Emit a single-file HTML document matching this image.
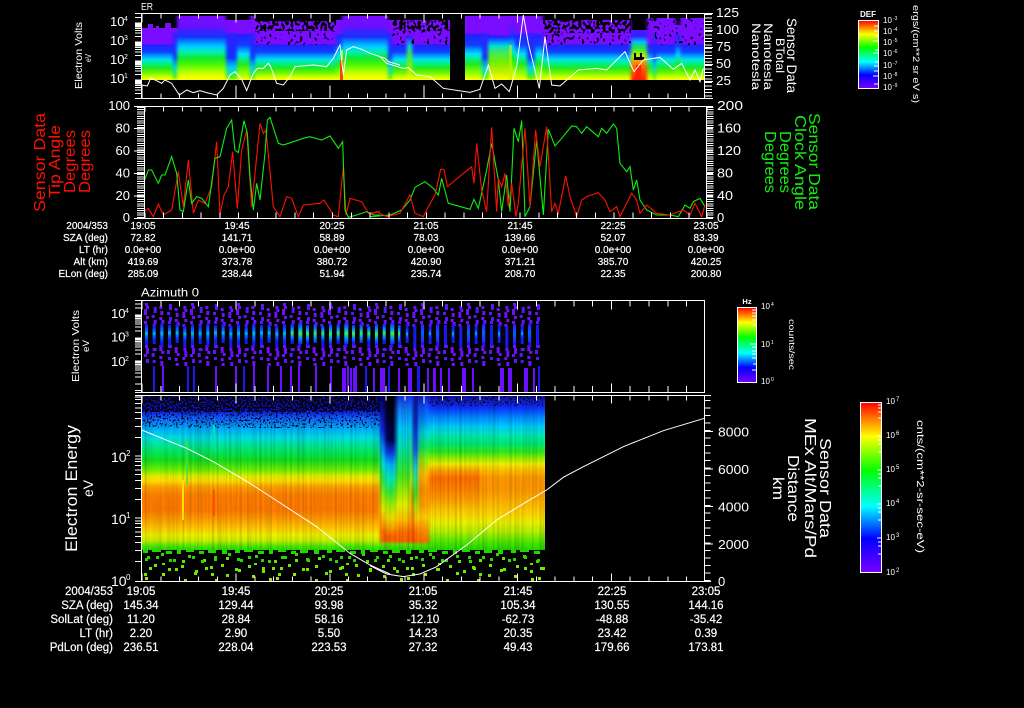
<!DOCTYPE html>
<html><head><meta charset="utf-8"><title>Sensor Data</title>
<style>
html,body{margin:0;padding:0;background:#000;width:1024px;height:708px;overflow:hidden}
svg{display:block}
text{font-family:"Liberation Sans",sans-serif;fill:#fff}
.t{font-size:10px;text-anchor:middle;stroke:#fff;stroke-width:.2}
.r{font-size:10px;text-anchor:end;stroke:#fff;stroke-width:.2}
.t2{font-size:11.5px;text-anchor:middle;stroke:#fff;stroke-width:.2}
.r2{font-size:11.5px;text-anchor:end;stroke:#fff;stroke-width:.2}
.s{font-size:7px}
</style></head><body>
<svg width="1024" height="708" viewBox="0 0 1024 708" xmlns="http://www.w3.org/2000/svg">
<defs>
<filter id="hb" x="-5%" y="0" width="110%" height="100%" color-interpolation-filters="sRGB"><feGaussianBlur stdDeviation="1.6 0"/></filter>
<filter id="nk1" x="0" y="0" width="100%" height="100%" color-interpolation-filters="sRGB"><feTurbulence type="fractalNoise" baseFrequency=".33 .27" numOctaves="1" seed="4"/><feColorMatrix values="0 0 0 0 0  0 0 0 0 0  0 0 0 0 0  14 0 0 0 -6.6"/></filter>
<filter id="nk2" x="0" y="0" width="100%" height="100%" color-interpolation-filters="sRGB"><feTurbulence type="fractalNoise" baseFrequency=".33 .27" numOctaves="1" seed="9"/><feColorMatrix values="0 0 0 0 0  0 0 0 0 0  0 0 0 0 0  14 0 0 0 -8.4"/></filter>
<filter id="nf1" x="0" y="0" width="100%" height="100%" color-interpolation-filters="sRGB"><feTurbulence type="fractalNoise" baseFrequency=".55" numOctaves="1" seed="7"/><feColorMatrix values="0 0 0 0 0  0 0 0 0 0  0 0 0 0 0  14 0 0 0 -6.2"/></filter>
<filter id="nf2" x="0" y="0" width="100%" height="100%" color-interpolation-filters="sRGB"><feTurbulence type="fractalNoise" baseFrequency=".55" numOctaves="1" seed="12"/><feColorMatrix values="0 0 0 0 0  0 0 0 0 0  0 0 0 0 0  14 0 0 0 -8"/></filter>
<filter id="nst" x="0" y="0" width="100%" height="100%" color-interpolation-filters="sRGB"><feTurbulence type="fractalNoise" baseFrequency=".4 .004" numOctaves="2" seed="3"/><feColorMatrix values="0 0 0 0 0  0 0 0 0 0  0 0 0 0 0  .45 0 0 0 -.18"/></filter>
<clipPath id="cl1"><rect x="142" y="15" width="308" height="65"/></clipPath>
<clipPath id="cl2"><rect x="465" y="15" width="240" height="65"/></clipPath>
<clipPath id="cl4"><rect x="142" y="396" width="403" height="154"/></clipPath>

<linearGradient id="a1" gradientUnits="userSpaceOnUse" x1="0" y1="0" x2="0" y2="1000"><stop offset=".016" stop-color="#7a0cff"/><stop offset=".027" stop-color="#6a10ff"/><stop offset=".03" stop-color="#4020ff"/><stop offset=".037" stop-color="#1a30ff"/><stop offset=".042" stop-color="#0090ff"/><stop offset=".047" stop-color="#00d0ff"/><stop offset=".052" stop-color="#00f0b0"/><stop offset=".058" stop-color="#10e830"/><stop offset=".065" stop-color="#50f800"/><stop offset=".071" stop-color="#a8ff00"/><stop offset=".076" stop-color="#e8ff00"/><stop offset=".08" stop-color="#ffff00"/></linearGradient>
<linearGradient id="a2" gradientUnits="userSpaceOnUse" x1="0" y1="0" x2="0" y2="1000"><stop offset=".02" stop-color="#7a0cff"/><stop offset=".044" stop-color="#7a0cff"/><stop offset=".045" stop-color="#2020ff"/><stop offset=".052" stop-color="#1040ff"/><stop offset=".056" stop-color="#00a0ff"/><stop offset=".06" stop-color="#00e8e0"/><stop offset=".064" stop-color="#00f080"/><stop offset=".068" stop-color="#20e820"/><stop offset=".073" stop-color="#70f800"/><stop offset=".077" stop-color="#d0ff00"/><stop offset=".08" stop-color="#ffff00"/></linearGradient>
<linearGradient id="a3" gradientUnits="userSpaceOnUse" x1="0" y1="0" x2="0" y2="1000"><stop offset=".02" stop-color="#7a0cff"/><stop offset=".032" stop-color="#7a0cff"/><stop offset=".034" stop-color="#3020ff"/><stop offset=".058" stop-color="#1030ff"/><stop offset=".062" stop-color="#0080ff"/><stop offset=".068" stop-color="#00d0f0"/><stop offset=".074" stop-color="#10e880"/><stop offset=".078" stop-color="#60f000"/><stop offset=".08" stop-color="#d0ff00"/></linearGradient>
<linearGradient id="a4" gradientUnits="userSpaceOnUse" x1="0" y1="0" x2="0" y2="1000"><stop offset=".02" stop-color="#7a0cff"/><stop offset=".033" stop-color="#7a0cff"/><stop offset=".035" stop-color="#2020ff"/><stop offset=".045" stop-color="#1040ff"/><stop offset=".05" stop-color="#00a0ff"/><stop offset=".054" stop-color="#00e0ff"/><stop offset=".058" stop-color="#00f0a0"/><stop offset=".064" stop-color="#20e820"/><stop offset=".072" stop-color="#80ff00"/><stop offset=".08" stop-color="#ffff00"/></linearGradient>
<linearGradient id="a5" gradientUnits="userSpaceOnUse" x1="0" y1="0" x2="0" y2="1000"><stop offset=".02" stop-color="#7a0cff"/><stop offset=".036" stop-color="#3020ff"/><stop offset=".042" stop-color="#00c0ff"/><stop offset=".048" stop-color="#20e840"/><stop offset=".056" stop-color="#c0f000"/><stop offset=".062" stop-color="#ff9000"/><stop offset=".07" stop-color="#ff5000"/><stop offset=".08" stop-color="#ff2000"/></linearGradient>
<linearGradient id="a6" gradientUnits="userSpaceOnUse" x1="0" y1="0" x2="0" y2="1000"><stop offset=".02" stop-color="#7a0cff"/><stop offset=".034" stop-color="#7a0cff"/><stop offset=".037" stop-color="#2020ff"/><stop offset=".042" stop-color="#0090ff"/><stop offset=".046" stop-color="#00e0d0"/><stop offset=".052" stop-color="#40e860"/><stop offset=".062" stop-color="#70f000"/><stop offset=".072" stop-color="#c0f000"/><stop offset=".08" stop-color="#ffff00"/></linearGradient>
<linearGradient id="b1" gradientUnits="userSpaceOnUse" x1="0" y1="0" x2="0" y2="1000"><stop offset=".396" stop-color="#101080"/><stop offset=".41" stop-color="#1010e0"/><stop offset=".418" stop-color="#1060ff"/><stop offset=".428" stop-color="#00a8ff"/><stop offset=".438" stop-color="#00e0e0"/><stop offset=".448" stop-color="#00e880"/><stop offset=".46" stop-color="#10e020"/><stop offset=".47" stop-color="#70f000"/><stop offset=".476" stop-color="#e0f000"/><stop offset=".481" stop-color="#ffe000"/><stop offset=".487" stop-color="#ffa000"/><stop offset=".495" stop-color="#ff8000"/><stop offset=".51" stop-color="#ff7a00"/><stop offset=".518" stop-color="#ff9800"/><stop offset=".528" stop-color="#ffc800"/><stop offset=".535" stop-color="#f0f000"/><stop offset=".541" stop-color="#c0f000"/><stop offset=".546" stop-color="#50e800"/><stop offset=".55" stop-color="#20e000"/></linearGradient>
<linearGradient id="b2" gradientUnits="userSpaceOnUse" x1="0" y1="0" x2="0" y2="1000"><stop offset=".396" stop-color="#1010a0"/><stop offset=".408" stop-color="#1030ff"/><stop offset=".416" stop-color="#0080ff"/><stop offset=".426" stop-color="#00c8ff"/><stop offset=".434" stop-color="#00e8c0"/><stop offset=".444" stop-color="#00e870"/><stop offset=".452" stop-color="#30e820"/><stop offset=".458" stop-color="#90f000"/><stop offset=".464" stop-color="#f0f000"/><stop offset=".47" stop-color="#ffc000"/><stop offset=".478" stop-color="#ff9800"/><stop offset=".49" stop-color="#ff9800"/><stop offset=".5" stop-color="#ffb000"/><stop offset=".512" stop-color="#ffd000"/><stop offset=".522" stop-color="#f0f000"/><stop offset=".532" stop-color="#b0f000"/><stop offset=".542" stop-color="#50e800"/><stop offset=".55" stop-color="#20d800"/></linearGradient>
<linearGradient id="b3" gradientUnits="userSpaceOnUse" x1="0" y1="0" x2="0" y2="1000"><stop offset=".396" stop-color="#1010a0"/><stop offset=".408" stop-color="#1030ff"/><stop offset=".416" stop-color="#0080ff"/><stop offset=".426" stop-color="#00c8ff"/><stop offset=".434" stop-color="#00e8c0"/><stop offset=".444" stop-color="#00e870"/><stop offset=".452" stop-color="#30e820"/><stop offset=".458" stop-color="#90f000"/><stop offset=".464" stop-color="#f0f000"/><stop offset=".47" stop-color="#ffa800"/><stop offset=".478" stop-color="#ff7000"/><stop offset=".488" stop-color="#ff8000"/><stop offset=".5" stop-color="#ffa000"/><stop offset=".512" stop-color="#ffd000"/><stop offset=".522" stop-color="#f0f000"/><stop offset=".532" stop-color="#b0f000"/><stop offset=".542" stop-color="#50e800"/><stop offset=".55" stop-color="#20d800"/></linearGradient>
<linearGradient id="d1" gradientUnits="userSpaceOnUse" x1="0" y1="0" x2="0" y2="1000"><stop offset=".396" stop-color="#000060"/><stop offset=".43" stop-color="#1020e0"/><stop offset=".448" stop-color="#0090ff"/><stop offset=".462" stop-color="#00e0d0"/><stop offset=".478" stop-color="#20e040"/><stop offset=".495" stop-color="#90f000"/><stop offset=".51" stop-color="#f0e800"/><stop offset=".522" stop-color="#ffa000"/><stop offset=".532" stop-color="#ff6000"/><stop offset=".541" stop-color="#ff6000"/><stop offset=".544" stop-color="#60e000"/><stop offset=".55" stop-color="#20d800"/></linearGradient>
<linearGradient id="d2" gradientUnits="userSpaceOnUse" x1="0" y1="0" x2="0" y2="1000"><stop offset=".396" stop-color="#000"/><stop offset=".44" stop-color="#000050"/><stop offset=".452" stop-color="#1030e0"/><stop offset=".465" stop-color="#00b0ff"/><stop offset=".478" stop-color="#00e8c0"/><stop offset=".492" stop-color="#30e840"/><stop offset=".505" stop-color="#a0f000"/><stop offset=".518" stop-color="#f0e000"/><stop offset=".528" stop-color="#ffa000"/><stop offset=".536" stop-color="#ff6000"/><stop offset=".541" stop-color="#ff6000"/><stop offset=".544" stop-color="#60e000"/><stop offset=".55" stop-color="#20d800"/></linearGradient>
<linearGradient id="d3" gradientUnits="userSpaceOnUse" x1="0" y1="0" x2="0" y2="1000"><stop offset=".396" stop-color="#1030e0"/><stop offset=".41" stop-color="#1080ff"/><stop offset=".428" stop-color="#00c8ff"/><stop offset=".445" stop-color="#00e0c0"/><stop offset=".46" stop-color="#10e860"/><stop offset=".475" stop-color="#40e820"/><stop offset=".492" stop-color="#a0f000"/><stop offset=".505" stop-color="#e8f000"/><stop offset=".52" stop-color="#ffc000"/><stop offset=".532" stop-color="#ff7000"/><stop offset=".541" stop-color="#ff6000"/><stop offset=".544" stop-color="#60e000"/><stop offset=".55" stop-color="#20d800"/></linearGradient>
<linearGradient id="d4" gradientUnits="userSpaceOnUse" x1="0" y1="0" x2="0" y2="1000"><stop offset=".396" stop-color="#1040ff"/><stop offset=".43" stop-color="#00d0c0"/><stop offset=".46" stop-color="#50e820"/><stop offset=".48" stop-color="#ffe000"/><stop offset=".49" stop-color="#ff8000"/><stop offset=".5" stop-color="#ff5000"/><stop offset=".541" stop-color="#ff4000"/><stop offset=".545" stop-color="#60e000"/><stop offset=".55" stop-color="#20d800"/></linearGradient>
<linearGradient id="d5" gradientUnits="userSpaceOnUse" x1="0" y1="0" x2="0" y2="1000"><stop offset=".396" stop-color="#101090"/><stop offset=".423" stop-color="#1010c0"/><stop offset=".45" stop-color="#1040ff"/><stop offset=".467" stop-color="#00c0f0"/><stop offset=".477" stop-color="#00e8a0"/><stop offset=".495" stop-color="#30e820"/><stop offset=".507" stop-color="#a0f000"/><stop offset=".52" stop-color="#ffc000"/><stop offset=".532" stop-color="#ff7000"/><stop offset=".541" stop-color="#ff6000"/><stop offset=".545" stop-color="#50e000"/><stop offset=".55" stop-color="#20d800"/></linearGradient>
<linearGradient id="d6" gradientUnits="userSpaceOnUse" x1="0" y1="0" x2="0" y2="1000"><stop offset=".396" stop-color="#1020c0"/><stop offset=".407" stop-color="#1050ff"/><stop offset=".42" stop-color="#0090ff"/><stop offset=".433" stop-color="#00d8e0"/><stop offset=".447" stop-color="#10e860"/><stop offset=".46" stop-color="#90f000"/><stop offset=".473" stop-color="#ffc000"/><stop offset=".49" stop-color="#ff9000"/><stop offset=".505" stop-color="#ffa000"/><stop offset=".517" stop-color="#ffd000"/><stop offset=".53" stop-color="#ff9000"/><stop offset=".541" stop-color="#ff7000"/><stop offset=".545" stop-color="#50e000"/><stop offset=".55" stop-color="#20d800"/></linearGradient>
<linearGradient id="cb" x1="0" y1="1" x2="0" y2="0"><stop offset="0" stop-color="#7800ff"/><stop offset=".2" stop-color="#0000ff"/><stop offset=".39" stop-color="#00ffff"/><stop offset=".6" stop-color="#00ff00"/><stop offset=".8" stop-color="#ffff00"/><stop offset="1" stop-color="#ff0000"/></linearGradient>
<linearGradient id="c3a" x1="0" y1="0" x2="0" y2="1"><stop offset="0" stop-color="#1818f0"/><stop offset=".35" stop-color="#0070ff"/><stop offset=".5" stop-color="#00c0e0"/><stop offset=".65" stop-color="#0070ff"/><stop offset="1" stop-color="#1818f0"/></linearGradient>
<linearGradient id="c3b" x1="0" y1="0" x2="0" y2="1"><stop offset="0" stop-color="#2020ff"/><stop offset=".3" stop-color="#00a0f0"/><stop offset=".5" stop-color="#40f040"/><stop offset=".7" stop-color="#00a0f0"/><stop offset="1" stop-color="#2020ff"/></linearGradient>
<linearGradient id="c3c" x1="0" y1="0" x2="0" y2="1"><stop offset="0" stop-color="#3020ff"/><stop offset=".5" stop-color="#0060ff"/><stop offset="1" stop-color="#3020ff"/></linearGradient>

<pattern id="psp" patternUnits="userSpaceOnUse" x="142" y="550" width="92" height="16">
<g fill="#20d800"><rect x="1" y="0" width="5" height="3"/><rect x="10" y="0" width="9" height="2"/><rect x="24" y="1" width="6" height="3"/><rect x="35" y="0" width="4" height="4"/><rect x="44" y="0" width="8" height="2"/><rect x="57" y="1" width="5" height="3"/><rect x="66" y="0" width="8" height="3"/><rect x="80" y="0" width="5" height="4"/><rect x="3" y="8" width="3" height="3"/><rect x="27" y="9" width="3" height="3"/><rect x="50" y="6" width="3" height="3"/><rect x="72" y="8" width="3" height="3"/><rect x="14" y="6" width="3" height="3"/></g>
<g fill="#60e800"><rect x="40" y="10" width="3" height="3"/><rect x="61" y="9" width="3" height="3"/><rect x="84" y="7" width="3" height="3"/><rect x="20" y="13" width="3" height="2"/></g></pattern>
<pattern id="psq" patternUnits="userSpaceOnUse" x="142" y="566" width="131" height="16">
<g fill="#70e800"><rect x="7" y="1" width="3" height="3"/><rect x="33" y="2" width="3" height="3"/><rect x="68" y="0" width="3" height="3"/><rect x="96" y="3" width="3" height="3"/><rect x="120" y="1" width="3" height="3"/><rect x="52" y="6" width="3" height="3"/><rect x="84" y="8" width="3" height="3"/></g>
<g fill="#a0e800"><rect x="20" y="7" width="3" height="3"/><rect x="110" y="9" width="3" height="3"/><rect x="3" y="11" width="3" height="3"/><rect x="42" y="13" width="3" height="3"/><rect x="73" y="13" width="3" height="3"/><rect x="127" y="12" width="3" height="3"/></g></pattern>
<pattern id="psr" patternUnits="userSpaceOnUse" x="142" y="553" width="67" height="24">
<g fill="#30d800"><rect x="5" y="3" width="3" height="3"/><rect x="19" y="0" width="3" height="3"/><rect x="31" y="6" width="3" height="3"/><rect x="46" y="2" width="3" height="3"/><rect x="59" y="7" width="3" height="3"/></g>
<g fill="#70e800"><rect x="12" y="11" width="3" height="3"/><rect x="26" y="15" width="3" height="3"/><rect x="39" y="12" width="3" height="3"/><rect x="53" y="17" width="3" height="3"/><rect x="2" y="20" width="3" height="3"/><rect x="63" y="14" width="3" height="3"/></g></pattern>
<g id="c1" fill="#6a10ff"><rect x="1" y="0" width="3" height="3"/><rect x="2" y="3" width="3" height="3"/><rect x="0" y="6" width="3" height="6"/><rect x="2" y="13" width="3" height="3"/><rect x="0" y="18" width="3" height="3"/><rect x="1" y="42" width="3" height="3"/><rect x="2" y="45" width="3" height="6"/><rect x="0" y="51" width="3" height="3"/><rect x="2" y="56" width="3" height="4"/></g>
<g id="c2" fill="#5a14ff"><rect x="2" y="1" width="3" height="6"/><rect x="0" y="9" width="3" height="3"/><rect x="2" y="14" width="3" height="4"/><rect x="1" y="18" width="3" height="3"/><rect x="1" y="42" width="4" height="3"/><rect x="0" y="47" width="3" height="4"/><rect x="1" y="54" width="3" height="3"/></g>
<g id="c3" fill="#7010ff"><rect x="0" y="3" width="3" height="3"/><rect x="1" y="8" width="3" height="4"/><rect x="0" y="14" width="3" height="3"/><rect x="2" y="17" width="3" height="4"/><rect x="0" y="42" width="3" height="6"/><rect x="2" y="48" width="3" height="3"/><rect x="0" y="53" width="3" height="3"/><rect x="1" y="58" width="3" height="5"/></g>
<pattern id="pc" patternUnits="userSpaceOnUse" x="144" y="303" width="46" height="89"><use href="#c1"/><use href="#c2" x="7.67" y="3"/><use href="#c3" x="15.33"/><use href="#c2" x="23"/><use href="#c3" x="30.67" y="2"/><use href="#c1" x="38.33" y="3"/><g fill="#1818f0"><rect x="1" y="21" width="3" height="21"/><rect x="8.67" y="23" width="3" height="18"/><rect x="16.33" y="20" width="3" height="24"/><rect x="24" y="22" width="3" height="20"/><rect x="31.67" y="21" width="3" height="19"/><rect x="39.33" y="23" width="3" height="22"/></g></pattern>
<pattern id="ca" patternUnits="userSpaceOnUse" x="144" y="323" width="46" height="22"><rect x="1" y="2" width="3" height="17" fill="url(#c3a)"/><rect x="8.67" y="4" width="3" height="13" fill="url(#c3a)"/><rect x="16.33" y="1" width="3" height="19" fill="url(#c3a)"/><rect x="24" y="3" width="3" height="14" fill="url(#c3a)"/><rect x="31.67" y="2" width="3" height="16" fill="url(#c3a)"/><rect x="39.33" y="4" width="3" height="14" fill="url(#c3a)"/></pattern>
<pattern id="cb2" patternUnits="userSpaceOnUse" x="144" y="323" width="46" height="22"><rect x="1" y="1" width="3" height="20" fill="url(#c3b)"/><rect x="8.67" y="2" width="3" height="16" fill="url(#c3b)"/><rect x="16.33" y="0" width="4" height="21" fill="url(#c3b)"/><rect x="24" y="2" width="3" height="17" fill="url(#c3b)"/><rect x="31.67" y="1" width="3" height="19" fill="url(#c3b)"/><rect x="39.33" y="3" width="3" height="15" fill="url(#c3b)"/></pattern>
<pattern id="cc" patternUnits="userSpaceOnUse" x="144" y="323" width="46" height="22"><rect x="1" y="2" width="3" height="17" fill="url(#c3c)"/><rect x="9" y="6" width="2" height="9" fill="url(#c3a)"/><rect x="16" y="2" width="3" height="17" fill="url(#c3c)"/><rect x="32" y="6" width="2" height="10" fill="url(#c3a)"/></pattern>
</defs>
<rect width="1024" height="708" fill="#000"/>

<!-- PANEL 1 spectrogram -->
<g clip-path="url(#cl1)"><g filter="url(#hb)">
<rect x="134" y="28" width="39" height="52" fill="url(#a2)"/>
<rect x="173" y="28" width="4" height="52" fill="url(#a3)"/>
<rect x="177" y="16" width="49" height="64" fill="url(#a1)"/>
<rect x="226" y="20" width="11" height="60" fill="url(#a3)"/>
<rect x="237" y="20" width="13" height="60" fill="url(#a4)"/>
<rect x="250" y="16" width="5" height="64" fill="url(#a3)"/>
<rect x="255" y="20" width="81" height="60" fill="url(#a2)"/>
<rect x="336" y="20" width="6" height="60" fill="url(#a4)"/>
<rect x="342" y="16" width="46" height="64" fill="url(#a1)"/>
<rect x="388" y="20" width="4" height="60" fill="url(#a3)"/>
<rect x="392" y="20" width="15" height="60" fill="url(#a2)"/>
<rect x="407" y="20" width="5" height="60" fill="url(#a6)"/>
<rect x="412" y="20" width="46" height="60" fill="url(#a2)"/>
</g></g>
<g clip-path="url(#cl2)"><g filter="url(#hb)">
<rect x="458" y="16" width="24" height="64" fill="url(#a4)"/>
<rect x="482" y="16" width="6" height="64" fill="url(#a3)"/>
<rect x="488" y="16" width="22" height="64" fill="url(#a6)"/>
<rect x="510" y="16" width="5" height="64" fill="url(#a1)"/>
<rect x="515" y="16" width="12" height="64" fill="url(#a4)"/>
<rect x="527" y="16" width="8" height="64" fill="url(#a3)"/>
<rect x="535" y="16" width="8" height="64" fill="url(#a4)"/>
<rect x="543" y="20" width="88" height="60" fill="url(#a2)"/>
<rect x="631" y="30" width="16" height="50" fill="url(#a5)"/>
<rect x="647" y="18" width="6" height="62" fill="url(#a2)"/>
<rect x="653" y="20" width="3" height="60" fill="url(#a3)"/>
<rect x="656" y="18" width="20" height="62" fill="url(#a2)"/>
<rect x="676" y="25" width="4" height="55" fill="url(#a4)"/>
<rect x="680" y="18" width="32" height="62" fill="url(#a2)"/>
</g></g>
<g shape-rendering="crispEdges">
<rect x="340" y="60" width="3" height="20" fill="#ff4000"/>
<rect x="341" y="50" width="2" height="10" fill="#c0f000"/>
<rect x="636" y="65" width="5" height="15" fill="#ff2000"/>
<rect x="634" y="57" width="10" height="3" fill="#000"/><rect x="634" y="53" width="2" height="5" fill="#000"/><rect x="640" y="53" width="2" height="5" fill="#000"/>
<rect x="509" y="45" width="3" height="35" fill="#c8f000" opacity=".6"/>
<g fill="#7a0cff"><rect x="148" y="24" width="5" height="4"/><rect x="156" y="26" width="3" height="2"/><rect x="165" y="23" width="6" height="5"/></g>
</g>
<rect x="255" y="15" width="81" height="6" fill="#000"/>
<rect x="392" y="15" width="58" height="5" fill="#000"/>
<rect x="255" y="20" width="81" height="11" filter="url(#nk1)"/>
<rect x="255" y="31" width="81" height="14" filter="url(#nk2)"/>
<rect x="392" y="18" width="58" height="13" filter="url(#nk1)"/>
<rect x="392" y="31" width="58" height="14" filter="url(#nk2)"/>
<rect x="543" y="18" width="88" height="15" filter="url(#nk1)"/>
<rect x="543" y="33" width="88" height="12" filter="url(#nk2)"/>
<rect x="647" y="16" width="58" height="12" filter="url(#nk2)"/>
<rect x="655" y="28" width="49" height="17" filter="url(#nk2)"/>

<!-- PANEL 3 spectrogram -->
<g shape-rendering="crispEdges">
<rect x="144" y="303" width="396" height="63" fill="url(#pc)"/>
<rect x="144" y="323" width="146" height="22" fill="url(#ca)"/>
<rect x="290" y="323" width="110" height="22" fill="url(#cb2)"/>
<rect x="400" y="323" width="140" height="22" fill="url(#cc)"/>
<g fill="#1a18f0"><rect x="153" y="366" width="2" height="26"/><rect x="187" y="366" width="2" height="26"/><rect x="193" y="366" width="2" height="26"/><rect x="243" y="366" width="2" height="26"/><rect x="388" y="366" width="2" height="26"/><rect x="417" y="366" width="3" height="26"/><rect x="538" y="366" width="2" height="26"/><rect x="365" y="366" width="2" height="26"/></g>
<g fill="#6a10ff"><rect x="162" y="366" width="2" height="26"/><rect x="215" y="366" width="2" height="26"/><rect x="235" y="366" width="2" height="26"/><rect x="253" y="366" width="2" height="26"/><rect x="267" y="366" width="2" height="26"/><rect x="280" y="366" width="2" height="26"/><rect x="290" y="366" width="2" height="26"/><rect x="298" y="366" width="2" height="26"/><rect x="315" y="366" width="2" height="26"/><rect x="330" y="366" width="2" height="26"/><rect x="347" y="366" width="2" height="26"/><rect x="355" y="366" width="2" height="26"/><rect x="342" y="368" width="4" height="24"/><rect x="350" y="368" width="2" height="24"/><rect x="353" y="368" width="2" height="24"/><rect x="373" y="368" width="2" height="24"/><rect x="380" y="368" width="5" height="24"/><rect x="398" y="368" width="2" height="24"/><rect x="408" y="368" width="4" height="24"/><rect x="427" y="368" width="2" height="24"/><rect x="433" y="368" width="3" height="24"/><rect x="440" y="368" width="2" height="24"/><rect x="448" y="368" width="2" height="24"/><rect x="462" y="368" width="4" height="24"/><rect x="472" y="368" width="2" height="24"/><rect x="500" y="368" width="4" height="24"/><rect x="508" y="368" width="4" height="24"/><rect x="524" y="368" width="4" height="24"/><rect x="533" y="368" width="2" height="24"/></g>
</g>

<!-- PANEL 4 spectrogram -->
<g clip-path="url(#cl4)"><g filter="url(#hb)">
<rect x="134" y="396" width="246" height="154" fill="url(#b1)"/>
<rect x="380" y="396" width="5" height="154" fill="url(#d1)"/>
<rect x="385" y="396" width="11" height="154" fill="url(#d2)"/>
<rect x="396" y="396" width="15" height="154" fill="url(#d3)"/>
<rect x="411" y="396" width="2" height="154" fill="url(#d4)"/>
<rect x="413" y="396" width="5" height="154" fill="url(#d5)"/>
<rect x="418" y="396" width="11" height="154" fill="url(#d6)"/>
<rect x="429" y="396" width="51" height="154" fill="url(#b3)"/>
<rect x="480" y="396" width="75" height="154" fill="url(#b2)"/>
</g></g>
<rect x="142" y="396" width="403" height="154" filter="url(#nst)"/>
<rect x="142" y="396" width="238" height="16" filter="url(#nf1)"/>
<rect x="142" y="412" width="238" height="16" filter="url(#nf2)"/>
<rect x="429" y="396" width="116" height="10" filter="url(#nf2)"/>
<g shape-rendering="crispEdges">
<rect x="182" y="480" width="2" height="40" fill="#ffe000"/>
<rect x="186" y="440" width="2" height="45" fill="#40e040" opacity=".7"/>
<rect x="213" y="490" width="2" height="26" fill="#ff5000"/>
<rect x="213" y="425" width="2" height="25" fill="#00e0b0"/>
<rect x="142" y="550" width="403" height="16" fill="url(#psp)"/>
<rect x="142" y="566" width="403" height="16" fill="url(#psq)"/>
<rect x="142" y="553" width="403" height="24" fill="url(#psr)"/>
</g>

<!-- Curves -->
<g fill="none" stroke-linejoin="miter">
<g transform="translate(60,0) scale(.33333)" stroke="#fff" stroke-width="3"><polyline points="245,255 262,258 272,235 290,242 305,250 315,240 335,250 358,285 380,270 400,278 420,272 440,278 470,285 490,265 510,225 525,215 545,238 560,272 580,220 592,205 610,205 625,190 632,200 650,250 670,255 690,230 705,200 760,195 800,200 820,175 840,135 850,225 860,150 880,140 905,148 930,160 975,175 985,185 1020,195"/></g>
<g transform="translate(380,0) scale(.33333)" stroke="#fff" stroke-width="3"><polyline points="0,170 20,190 70,205 85,203 110,225 150,230 190,265 270,277 300,268 325,195 345,265 365,252 388,275 410,200 430,45 445,130 478,265 495,110 515,255 540,258 595,210 650,205 680,210 735,155 762,215 790,180 840,172 880,208 905,190 930,240 945,210 960,245 970,205"/></g>
<g transform="translate(20,100) scale(.33333)" stroke-width="3.3">
<polyline stroke="#ff1000" points="372,335 385,325 400,350 415,312 430,345 455,330 475,215 490,320 505,180 520,340 535,300 555,310 575,260 590,125 600,345 612,285 625,260 638,155 652,325 665,150 680,90 695,320 720,70 730,100 738,90 760,320 780,350 800,290 815,295 835,350 850,315 900,310 912,300 940,345 955,350 970,200 978,345 990,295 1025,305 1045,340 1080,335"/>
<polyline stroke="#10ee10" points="372,245 385,210 395,210 415,250 425,225 435,225 455,170 470,220 480,330 490,335 505,240 515,310 530,290 545,295 565,320 585,175 600,170 620,85 635,60 645,150 655,158 672,62 682,100 690,230 700,330 710,250 720,300 735,160 742,60 750,52 775,130 790,135 850,115 870,110 905,120 930,108 955,145 968,125 975,330 985,352 1010,345 1040,335 1060,345 1080,345"/>
</g>
<g transform="translate(370,100) scale(.33333)" stroke-width="3.3">
<polyline stroke="#10ee10" points="0,350 60,345 95,330 120,300 135,262 165,245 190,265 205,285 215,235 235,310 300,328 312,298 325,325 350,210 365,130 385,240 395,335 410,225 420,335 432,85 445,125 455,62 465,350 480,320 500,120 520,345 535,88 555,138 575,115 605,78 620,80 635,100 650,80 685,110 695,85 710,100 730,72 740,85 750,190 770,215 780,200 790,270 800,240 810,300 830,330 860,345 900,345 925,350 945,315 960,325 970,305 990,295 1005,320"/>
<polyline stroke="#ff1000" points="0,345 20,335 50,350 90,340 120,285 135,340 160,350 175,320 195,285 212,208 222,208 232,260 305,200 312,250 320,130 335,270 350,335 365,82 380,335 385,235 395,260 405,220 415,320 425,250 438,350 445,310 465,85 480,320 497,90 510,200 530,80 545,335 555,310 565,340 587,228 600,290 620,350 635,300 650,290 685,278 705,300 720,335 740,320 750,350 785,280 800,300 810,340 830,315 860,340 900,345 940,330 960,345 975,310 995,350 1005,315"/>
</g>
<g transform="translate(50,390) scale(.33333)" stroke="#fff" stroke-width="3"><polyline points="275,120 410,175 490,215 600,280 700,345 800,410 900,490 960,525 1020,552"/></g>
<g transform="translate(370,390) scale(.33333)" stroke="#fff" stroke-width="3"><polyline points="0,527 50,552 100,560 150,552 200,530 290,465 380,390 470,335 530,300 580,262 640,230 760,170 880,122 1003,85"/></g>
</g>

<!-- Axes -->
<g stroke="#fff" fill="none" stroke-width="1" shape-rendering="crispEdges">
<path d="M135 13.5H713M135 98.5H713M141.5 13V99M704.5 13V99"/>
<line x1="141.7" x2="705" y1="16" y2="16" stroke-width="5" stroke-dasharray="1 17.77"/>
<line x1="141.7" x2="705" y1="96" y2="96" stroke-width="5" stroke-dasharray="1 17.77"/>
<line x1="141.7" x2="705" y1="92" y2="92" stroke-width="13" stroke-dasharray="1 92.85"/>
<line x1="141.7" x2="705" y1="18" y2="18" stroke-width="9" stroke-dasharray="1 92.85"/>
<path d="M135 93.3h6M135 89.9h6M135 87.6h6M135 85.7h6M135 84.2h6M135 83h6M135 81.8h6M135 80.9h6M135 80h6M135 74.3h6M135 70.9h6M135 68.6h6M135 66.7h6M135 65.2h6M135 64h6M135 62.8h6M135 61.9h6M135 61h6M135 55.3h6M135 51.9h6M135 49.6h6M135 47.7h6M135 46.2h6M135 45h6M135 43.8h6M135 42.9h6M135 42h6M135 36.3h6M135 32.9h6M135 30.6h6M135 28.7h6M135 27.2h6M135 26h6M135 24.8h6M135 23.9h6M135 23h6M135 17.3h6"/>
<line x1="708.5" x2="708.5" y1="14" y2="98" stroke-width="7" stroke-dasharray="1 2.4"/>
<path d="M705 30.5h8M705 47.5h8M705 64.5h8M705 81.5h8"/>
<path d="M134 106.5H713M134 218.5H713M144.5 106V219M706.5 106V219"/>
<line x1="144.3" x2="708" y1="109" y2="109" stroke-width="5" stroke-dasharray="1 17.77"/>
<line x1="144.3" x2="708" y1="215.5" y2="215.5" stroke-width="6" stroke-dasharray="1 17.77"/>
<line x1="140.5" x2="140.5" y1="107" y2="218" stroke-width="7" stroke-dasharray="1 1.24"/>
<line x1="710" x2="710" y1="107" y2="218" stroke-width="7" stroke-dasharray="1 1.24"/>
<path d="M134 128.5h10M134 151h10M134 173.5h10M134 196h10M707 128.5h6M707 151h6M707 173.5h6M707 196h6"/>
<path d="M135 300.5H705M135 392.5H705M141.5 300V393M704.5 300V393"/>
<line x1="141.7" x2="705" y1="303.5" y2="303.5" stroke-width="6" stroke-dasharray="1 17.77"/>
<line x1="141.7" x2="705" y1="389" y2="389" stroke-width="6" stroke-dasharray="1 17.77"/>
<line x1="141.7" x2="705" y1="305" y2="305" stroke-width="9" stroke-dasharray="1 92.85"/>
<line x1="141.7" x2="705" y1="388" y2="388" stroke-width="9" stroke-dasharray="1 92.85"/>
<path d="M135 390.5h6M135 384h6M135 377.1h6M135 373h6M135 370.2h6M135 368h6M135 366.1h6M135 364.6h6M135 363.2h6M135 362h6M135 361h6M135 354.1h6M135 350h6M135 347.2h6M135 345h6M135 343.1h6M135 341.6h6M135 340.2h6M135 339h6M135 338h6M135 331.1h6M135 327h6M135 324.2h6M135 322h6M135 320.1h6M135 318.6h6M135 317.2h6M135 316h6M135 315h6M135 308.1h6M135 304h6"/>
<path d="M135 395.5H711M135 581.5H711M141.5 395V582M704.5 395V582"/>
<line x1="141.7" x2="705" y1="398" y2="398" stroke-width="5" stroke-dasharray="1 17.77"/>
<line x1="141.7" x2="705" y1="579" y2="579" stroke-width="5" stroke-dasharray="1 17.77"/>
<line x1="141.7" x2="705" y1="399.5" y2="399.5" stroke-width="8" stroke-dasharray="1 92.85"/>
<line x1="141.7" x2="705" y1="577.5" y2="577.5" stroke-width="8" stroke-dasharray="1 92.85"/>
<path d="M135 561.3h6M135 550.4h6M135 542.7h6M135 536.7h6M135 531.8h6M135 527.6h6M135 523.7h6M135 520.8h6M135 518h6M135 499.3h6M135 488.4h6M135 480.7h6M135 474.7h6M135 469.8h6M135 465.6h6M135 461.7h6M135 458.8h6M135 456h6M135 437.3h6M135 426.4h6M135 418.7h6M135 412.7h6M135 407.8h6M135 403.6h6M135 399.7h6M135 396.8h6"/>
<line x1="707.5" x2="707.5" y1="400" y2="582" stroke-width="6" stroke-dasharray="1 6.5"/>
<path d="M705 431.5h8M705 469h8M705 506.5h8M705 544h8"/>
</g>

<!-- Colorbars -->
<g shape-rendering="crispEdges">
<rect x="858.5" y="20.5" width="20" height="68" fill="url(#cb)" stroke="#fff"/>
<path d="M874 26h4M874 31h4M875 36h3M873 41h5M875 50h3M873 53h5M875 62h3M874 66h4M874 71h4M873 76h5M874 84h4" stroke="#fff" fill="none"/>
<rect x="737.5" y="307.5" width="19" height="75" fill="url(#cb)" stroke="#fff"/>
<path d="M752 310h4M752 313h4M752 316h4M752 320h4M753 325h3M750 344h6M752 347h4M752 351h4M752 354h4M752 358h4M753 364h3M752 370h4" stroke="#fff" fill="none"/>
<rect x="860.5" y="402.5" width="21" height="170" fill="url(#cb)" stroke="#fff"/>
<path d="M878 405h3M878 408h3M878 412h3M878 418h3M877 436h4M878 440h3M878 444h3M878 452h3M877 470h4M878 474h3M878 478h3M878 486h3M877 504h4M878 508h3M878 512h3M878 520h3M877 538h4M878 542h3M878 546h3M878 554h3" stroke="#fff" fill="none"/>
</g>

<!-- Text -->
<text x="141" y="10" font-size="10" textLength="12" lengthAdjust="spacingAndGlyphs">ER</text>
<text x="141" y="296.5" font-size="12" textLength="58" lengthAdjust="spacingAndGlyphs">Azimuth 0</text>
<text x="868" y="17" font-size="8" font-weight="bold" text-anchor="middle">DEF</text>
<text x="747" y="304" font-size="7.5" font-weight="bold" text-anchor="middle">Hz</text>

<g font-size="13">
<text x="110" y="26">10</text><text x="124" y="21" class="s">4</text>
<text x="110" y="45">10</text><text x="124" y="40" class="s">3</text>
<text x="110" y="64">10</text><text x="124" y="59" class="s">2</text>
<text x="110" y="83">10</text><text x="124" y="78" class="s">1</text>
<text x="716" y="17" textLength="23" lengthAdjust="spacingAndGlyphs">125</text>
<text x="716" y="34" textLength="23" lengthAdjust="spacingAndGlyphs">100</text>
<text x="716" y="51" textLength="15" lengthAdjust="spacingAndGlyphs">75</text>
<text x="716" y="68" textLength="15" lengthAdjust="spacingAndGlyphs">50</text>
<text x="716" y="85" textLength="15" lengthAdjust="spacingAndGlyphs">25</text>
</g>
<g font-size="13">
<text x="130" y="110" text-anchor="end">100</text>
<text x="130" y="132.5" text-anchor="end">80</text>
<text x="130" y="155" text-anchor="end">60</text>
<text x="130" y="177.5" text-anchor="end">40</text>
<text x="130" y="200" text-anchor="end">20</text>
<text x="130" y="222" text-anchor="end">0</text>
<text x="717" y="110" textLength="26" lengthAdjust="spacingAndGlyphs">200</text>
<text x="717" y="132.5" textLength="24" lengthAdjust="spacingAndGlyphs">160</text>
<text x="717" y="155" textLength="24" lengthAdjust="spacingAndGlyphs">120</text>
<text x="717" y="177.5" textLength="16" lengthAdjust="spacingAndGlyphs">80</text>
<text x="717" y="200" textLength="16" lengthAdjust="spacingAndGlyphs">40</text>
<text x="717" y="222">0</text>
</g>
<g font-size="13">
<text x="111" y="318">10</text><text x="125" y="313" class="s">4</text>
<text x="111" y="341.5">10</text><text x="125" y="336.5" class="s">3</text>
<text x="111" y="366">10</text><text x="125" y="361" class="s">2</text>
</g>
<g font-size="14">
<text x="111" y="462">10</text><text x="126" y="456" font-size="8">2</text>
<text x="111" y="524">10</text><text x="126" y="518" font-size="8">1</text>
<text x="111" y="586">10</text><text x="126" y="580" font-size="8">0</text>
</g>
<g font-size="13">
<text x="718" y="436.5" textLength="31" lengthAdjust="spacingAndGlyphs">8000</text>
<text x="718" y="474" textLength="31" lengthAdjust="spacingAndGlyphs">6000</text>
<text x="718" y="511.5" textLength="31" lengthAdjust="spacingAndGlyphs">4000</text>
<text x="718" y="549" textLength="31" lengthAdjust="spacingAndGlyphs">2000</text>
<text x="718" y="586">0</text>
</g>

<g font-size="8">
<text x="883" y="23">10</text><text x="893" y="20" font-size="5">-3</text>
<text x="883" y="34">10</text><text x="893" y="31" font-size="5">-4</text>
<text x="883" y="45">10</text><text x="893" y="42" font-size="5">-5</text>
<text x="883" y="56">10</text><text x="893" y="53" font-size="5">-6</text>
<text x="883" y="68">10</text><text x="893" y="65" font-size="5">-7</text>
<text x="883" y="79">10</text><text x="893" y="76" font-size="5">-8</text>
<text x="883" y="90">10</text><text x="893" y="87" font-size="5">-9</text>
<text x="761" y="309">10</text><text x="771" y="306" font-size="5">4</text>
<text x="761" y="347">10</text><text x="771" y="344" font-size="5">1</text>
<text x="761" y="384">10</text><text x="771" y="381" font-size="5">0</text>
<text x="886" y="404">10</text><text x="896" y="401" font-size="6">7</text>
<text x="886" y="438">10</text><text x="896" y="435" font-size="6">6</text>
<text x="886" y="472">10</text><text x="896" y="469" font-size="6">5</text>
<text x="886" y="506">10</text><text x="896" y="503" font-size="6">4</text>
<text x="886" y="540">10</text><text x="896" y="537" font-size="6">3</text>
<text x="886" y="575">10</text><text x="896" y="572" font-size="6">2</text>
</g>

<text transform="translate(787,18) rotate(90)" font-size="14" textLength="75" lengthAdjust="spacingAndGlyphs">Sensor Data</text>
<text transform="translate(776,38) rotate(90)" font-size="12" textLength="35" lengthAdjust="spacingAndGlyphs">BTotal</text>
<text transform="translate(764,23) rotate(90)" font-size="12" textLength="67" lengthAdjust="spacingAndGlyphs">Nanotesla</text>
<text transform="translate(752,23) rotate(90)" font-size="12" textLength="67" lengthAdjust="spacingAndGlyphs">Nanotesla</text>
<text transform="translate(913,5) rotate(90)" font-size="9" textLength="98" lengthAdjust="spacingAndGlyphs">ergs/(cm**2 sr eV s)</text>
<text transform="translate(789,319) rotate(90)" font-size="8" textLength="51" lengthAdjust="spacingAndGlyphs">counts/sec</text>
<text transform="translate(917,420) rotate(90)" font-size="10" textLength="133" lengthAdjust="spacingAndGlyphs">cnts/(cm**2-sr-sec-eV)</text>
<text transform="translate(820,438) rotate(90)" font-size="16" textLength="100" lengthAdjust="spacingAndGlyphs">Sensor Data</text>
<text transform="translate(805,418) rotate(90)" font-size="16" textLength="140" lengthAdjust="spacingAndGlyphs">MEx Alt/Mars/Pd</text>
<text transform="translate(788,455) rotate(90)" font-size="16" textLength="67" lengthAdjust="spacingAndGlyphs">Distance</text>
<text transform="translate(773,477) rotate(90)" font-size="16" textLength="23" lengthAdjust="spacingAndGlyphs">km</text>
<text transform="translate(809,113) rotate(90)" font-size="16" textLength="97" lengthAdjust="spacingAndGlyphs" style="fill:#10ee10">Sensor Data</text>
<text transform="translate(795,115) rotate(90)" font-size="16" textLength="95" lengthAdjust="spacingAndGlyphs" style="fill:#10ee10">Clock Angle</text>
<text transform="translate(780,131) rotate(90)" font-size="16" textLength="62" lengthAdjust="spacingAndGlyphs" style="fill:#10ee10">Degrees</text>
<text transform="translate(765,131) rotate(90)" font-size="16" textLength="62" lengthAdjust="spacingAndGlyphs" style="fill:#10ee10">Degrees</text>
<text transform="translate(45,212) rotate(-90)" font-size="16" textLength="99" lengthAdjust="spacingAndGlyphs" style="fill:#ff1000">Sensor Data</text>
<text transform="translate(60,198) rotate(-90)" font-size="16" textLength="73" lengthAdjust="spacingAndGlyphs" style="fill:#ff1000">Tip Angle</text>
<text transform="translate(75,193) rotate(-90)" font-size="16" textLength="63" lengthAdjust="spacingAndGlyphs" style="fill:#ff1000">Degrees</text>
<text transform="translate(90,193) rotate(-90)" font-size="16" textLength="63" lengthAdjust="spacingAndGlyphs" style="fill:#ff1000">Degrees</text>
<text transform="translate(82,89) rotate(-90)" font-size="10" textLength="67" lengthAdjust="spacingAndGlyphs">Electron Volts</text>
<text transform="translate(91,62) rotate(-90)" font-size="8" textLength="8" lengthAdjust="spacingAndGlyphs">eV</text>
<text transform="translate(79,382) rotate(-90)" font-size="10" textLength="72" lengthAdjust="spacingAndGlyphs">Electron Volts</text>
<text transform="translate(89,352) rotate(-90)" font-size="9" textLength="12" lengthAdjust="spacingAndGlyphs">eV</text>
<text transform="translate(77,552) rotate(-90)" font-size="17" textLength="127" lengthAdjust="spacingAndGlyphs">Electron Energy</text>
<text transform="translate(93,497) rotate(-90)" font-size="14" textLength="17" lengthAdjust="spacingAndGlyphs">eV</text>

<text class="r" x="108" y="229">2004/353</text>
<text class="r" x="108" y="241">SZA (deg)</text>
<text class="r" x="108" y="253">LT (hr)</text>
<text class="r" x="108" y="265">Alt (km)</text>
<text class="r" x="108" y="277">ELon (deg)</text>
<text class="t" x="143" y="229">19:05</text><text class="t" x="237" y="229">19:45</text><text class="t" x="332" y="229">20:25</text><text class="t" x="426" y="229">21:05</text><text class="t" x="520" y="229">21:45</text><text class="t" x="613" y="229">22:25</text><text class="t" x="706" y="229">23:05</text>
<text class="t" x="143" y="241">72.82</text><text class="t" x="237" y="241">141.71</text><text class="t" x="332" y="241">58.89</text><text class="t" x="426" y="241">78.03</text><text class="t" x="520" y="241">139.66</text><text class="t" x="613" y="241">52.07</text><text class="t" x="706" y="241">83.39</text>
<text class="t" x="143" y="253">0.0e+00</text><text class="t" x="237" y="253">0.0e+00</text><text class="t" x="332" y="253">0.0e+00</text><text class="t" x="426" y="253">0.0e+00</text><text class="t" x="520" y="253">0.0e+00</text><text class="t" x="613" y="253">0.0e+00</text><text class="t" x="706" y="253">0.0e+00</text>
<text class="t" x="143" y="265">419.69</text><text class="t" x="237" y="265">373.78</text><text class="t" x="332" y="265">380.72</text><text class="t" x="426" y="265">420.90</text><text class="t" x="520" y="265">371.21</text><text class="t" x="613" y="265">385.70</text><text class="t" x="706" y="265">420.25</text>
<text class="t" x="143" y="277">285.09</text><text class="t" x="237" y="277">238.44</text><text class="t" x="332" y="277">51.94</text><text class="t" x="426" y="277">235.74</text><text class="t" x="520" y="277">208.70</text><text class="t" x="613" y="277">22.35</text><text class="t" x="706" y="277">200.80</text>

<text class="r2" x="113" y="595">2004/353</text>
<text class="r2" x="113" y="609">SZA (deg)</text>
<text class="r2" x="113" y="623">SolLat (deg)</text>
<text class="r2" x="113" y="637">LT (hr)</text>
<text class="r2" x="113" y="651">PdLon (deg)</text>
<text class="t2" x="141" y="595">19:05</text><text class="t2" x="236" y="595">19:45</text><text class="t2" x="329" y="595">20:25</text><text class="t2" x="423" y="595">21:05</text><text class="t2" x="518" y="595">21:45</text><text class="t2" x="612" y="595">22:25</text><text class="t2" x="706" y="595">23:05</text>
<text class="t2" x="141" y="609">145.34</text><text class="t2" x="236" y="609">129.44</text><text class="t2" x="329" y="609">93.98</text><text class="t2" x="423" y="609">35.32</text><text class="t2" x="518" y="609">105.34</text><text class="t2" x="612" y="609">130.55</text><text class="t2" x="706" y="609">144.16</text>
<text class="t2" x="141" y="623">11.20</text><text class="t2" x="236" y="623">28.84</text><text class="t2" x="329" y="623">58.16</text><text class="t2" x="423" y="623">-12.10</text><text class="t2" x="518" y="623">-62.73</text><text class="t2" x="612" y="623">-48.88</text><text class="t2" x="706" y="623">-35.42</text>
<text class="t2" x="141" y="637">2.20</text><text class="t2" x="236" y="637">2.90</text><text class="t2" x="329" y="637">5.50</text><text class="t2" x="423" y="637">14.23</text><text class="t2" x="518" y="637">20.35</text><text class="t2" x="612" y="637">23.42</text><text class="t2" x="706" y="637">0.39</text>
<text class="t2" x="141" y="651">236.51</text><text class="t2" x="236" y="651">228.04</text><text class="t2" x="329" y="651">223.53</text><text class="t2" x="423" y="651">27.32</text><text class="t2" x="518" y="651">49.43</text><text class="t2" x="612" y="651">179.66</text><text class="t2" x="706" y="651">173.81</text>
</svg>
</body></html>
